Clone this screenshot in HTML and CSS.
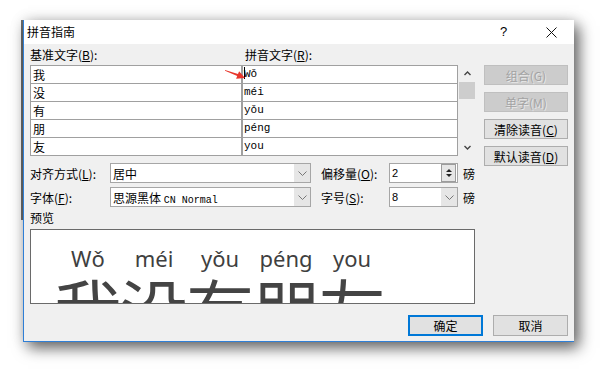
FILE: index.html
```html
<!DOCTYPE html>
<html>
<head>
    <title>拼音指南</title>
    <link rel="stylesheet" href="styles.css">
</head>
<body>
    <div class="stage">
        <!-- edge of the window behind the dialog -->
        <div class="behind-edge"></div>

        <div class="dialog">
            <div class="titlebar">
                <span class="title">拼音指南</span>
                <span class="help">?</span>
                <span class="close">
                    <svg width="11" height="11" viewBox="0 0 11 11"><path d="M0.5 0.5 L10.5 10.5 M10.5 0.5 L0.5 10.5" stroke="#111" stroke-width="1" fill="none"/></svg>
                </span>
            </div>

            <div class="content">
                <div class="main">
                    <div class="left">
                        <div class="heads">
                            <span class="head-base">基准文字(<u>B</u>):</span>
                            <span>拼音文字(<u>R</u>):</span>
                        </div>

                        <div class="table-wrap">
                            <div class="grid">
                                <div class="cell">我</div><div class="cell ruby"><i class="caret"></i>Wǒ</div>
                                <div class="cell">没</div><div class="cell ruby">méi</div>
                                <div class="cell">有</div><div class="cell ruby">yǒu</div>
                                <div class="cell">朋</div><div class="cell ruby">péng</div>
                                <div class="cell">友</div><div class="cell ruby">you</div>
                            </div>
                            <div class="scrollbar">
                                <div class="sb-btn"><svg width="7" height="5" viewBox="0 0 7 5"><path d="M0.5 4 L3.5 1 L6.5 4" stroke="#444" stroke-width="1.4" fill="none"/></svg></div>
                                <div class="sb-thumb"></div>
                                <div class="sb-track"></div>
                                <div class="sb-btn"><svg width="7" height="5" viewBox="0 0 7 5"><path d="M0.5 1 L3.5 4 L6.5 1" stroke="#444" stroke-width="1.4" fill="none"/></svg></div>
                            </div>
                            <svg class="arrow" width="24" height="16" viewBox="0 0 24 16">
                                <polygon points="1,4 14,7.9 15.1,5.3 21,12 12.1,12.7 13.2,10.1 1,4.8" fill="#e8372c"/>
                            </svg>
                        </div>

                        <div class="opt-row">
                            <span class="opt-label">对齐方式(<u>L</u>):</span>
                            <div class="combo wide"><span class="combo-text">居中</span><span class="drop"><svg width="9" height="5" viewBox="0 0 9 5"><path d="M0.5 0.5 L4.5 4.5 L8.5 0.5" stroke="#777" fill="none"/></svg></span></div>
                            <span class="opt-label2">偏移量(<u>O</u>):</span>
                            <div class="combo small"><span class="num">2</span><span class="spin"><span class="spin-up"></span><span class="spin-down"></span></span></div>
                            <span class="unit">磅</span>
                        </div>
                        <div class="opt-row second">
                            <span class="opt-label">字体(<u>F</u>):</span>
                            <div class="combo wide"><span class="combo-text">思源黑体 <span class="mono">CN Normal</span></span><span class="drop"><svg width="9" height="5" viewBox="0 0 9 5"><path d="M0.5 0.5 L4.5 4.5 L8.5 0.5" stroke="#777" fill="none"/></svg></span></div>
                            <span class="opt-label2">字号(<u>S</u>):</span>
                            <div class="combo small"><span class="num">8</span><span class="drop"><svg width="9" height="5" viewBox="0 0 9 5"><path d="M0.5 0.5 L4.5 4.5 L8.5 0.5" stroke="#777" fill="none"/></svg></span></div>
                            <span class="unit">磅</span>
                        </div>

                        <div class="preview-label">预览</div>
                        <div class="preview">
                            <div class="pv-col"><span class="py">Wǒ</span><span class="hz">我</span></div>
                            <div class="pv-col"><span class="py">méi</span><span class="hz">没</span></div>
                            <div class="pv-col"><span class="py">yǒu</span><span class="hz">有</span></div>
                            <div class="pv-col"><span class="py">péng</span><span class="hz">朋</span></div>
                            <div class="pv-col"><span class="py">you</span><span class="hz">友</span></div>
                        </div>
                    </div>

                    <div class="side">
                        <button class="btn disabled">组合(G)</button>
                        <button class="btn disabled">单字(M)</button>
                        <button class="btn">清除读音(<u>C</u>)</button>
                        <button class="btn">默认读音(<u>D</u>)</button>
                    </div>
                </div>

                <div class="footer">
                    <button class="btn footer-btn default">确定</button>
                    <button class="btn footer-btn">取消</button>
                </div>
            </div>
        </div>
    </div>
</body>
</html>
```

FILE: styles.css
```css
body {
    margin: 0;
    background: #fff;
    font-family: "Noto Sans CJK SC", "Noto Sans", sans-serif;
    font-size: 12px;
    color: #000;
}

u {
    text-decoration: underline;
    text-underline-offset: 1px;
}

.stage {
    position: relative;
    width: 616px;
    height: 385px;
    padding: 20px 0 0 23px;
    box-sizing: border-box;
}

.behind-edge {
    position: absolute;
    left: 21px;
    top: 20px;
    width: 2px;
    height: 200px;
    background: #6e6e6e;
}

/* Dialog frame */
.dialog {
    position: relative;
    width: 551px;
    height: 322px;
    box-sizing: border-box;
    background: #f0f0f0;
    border-left: 1px solid #2f7fd6;
    border-bottom: 1px solid #2f7fd6;
    box-shadow: 5px 6px 14px rgba(0, 0, 0, 0.6), 0 0 14px rgba(0, 0, 0, 0.12);
}

.titlebar {
    height: 24px;
    background: #fff;
    display: flex;
    align-items: center;
    line-height: 24px;
}

.title {
    padding-left: 3px;
    flex: 1;
}

.help {
    width: 14px;
    font-family: "Liberation Sans", sans-serif;
    font-size: 13px;
    margin-right: 32px;
}

.close {
    display: flex;
    width: 12px;
    margin-right: 16px;
}

.content {
    padding: 0 6px;
}

.main {
    display: flex;
    gap: 9px;
}

.left {
    width: 445px;
}

.heads {
    height: 21px;
    line-height: 21px;
    display: flex;
}

.head-base {
    width: 215px;
}

/* Base text / ruby grid */
.table-wrap {
    position: relative;
    display: flex;
}

.grid {
    display: grid;
    grid-template-columns: 212px 215px;
    grid-auto-rows: 18px;
    border-top: 1px solid #a0a0a0;
    border-left: 1px solid #a0a0a0;
}

.cell {
    background: #fff;
    border-right: 1px solid #a0a0a0;
    border-bottom: 1px solid #a0a0a0;
    padding-left: 2px;
    line-height: 17px;
    white-space: nowrap;
}

.cell:nth-child(odd) {
    border-right-width: 2px;
}

.cell.ruby {
    font-family: "Liberation Mono", monospace;
    font-size: 11px;
    padding-left: 1px;
}

.caret {
    display: inline-block;
    width: 1px;
    height: 12px;
    background: #000;
    vertical-align: -2px;
    margin-right: -1px;
}

.arrow {
    position: absolute;
    left: 194px;
    top: 1px;
}

.scrollbar {
    width: 16px;
    margin-left: 1px;
    display: flex;
    flex-direction: column;
}

.sb-btn {
    height: 17px;
    display: flex;
    align-items: center;
    justify-content: center;
}

.sb-thumb {
    height: 17px;
    background: #cdcdcd;
}

.sb-track {
    flex: 1;
}

/* Alignment / font options */
.opt-row {
    display: flex;
    align-items: center;
    height: 20px;
    margin-top: 7px;
}

.opt-row.second {
    margin-top: 4px;
}

.opt-label {
    width: 80px;
}

.opt-label2 {
    width: 68px;
    margin-left: 10px;
}

.combo {
    height: 20px;
    box-sizing: border-box;
    border: 1px solid #a6a6a6;
    background: #fff;
    display: flex;
    align-items: center;
}

.combo.wide {
    width: 201px;
}

.combo.small {
    width: 69px;
}

.combo-text {
    flex: 1;
    padding-left: 2px;
    white-space: nowrap;
}

.mono {
    font-family: "Liberation Mono", monospace;
    font-size: 10px;
}

.num {
    flex: 1;
    padding-left: 2px;
    font-family: "Liberation Sans", sans-serif;
    font-size: 11px;
}

.drop {
    width: 16px;
    height: 18px;
    background: #e6e6e6;
    display: flex;
    align-items: center;
    justify-content: center;
}

.spin {
    width: 13px;
    height: 16px;
    margin-right: 1px;
    border: 1px solid #9c9c9c;
    background: #e6e6e6;
    display: flex;
    flex-direction: column;
    align-items: center;
    justify-content: center;
    gap: 2px;
}

.spin-up,
.spin-down {
    width: 0;
    height: 0;
    border-left: 3px solid transparent;
    border-right: 3px solid transparent;
}

.spin-up {
    border-bottom: 3px solid #222;
}

.spin-down {
    border-top: 3px solid #222;
}

.unit {
    margin-left: 5px;
}

/* Preview */
.preview-label {
    height: 22px;
    line-height: 22px;
}

.preview {
    height: 75px;
    box-sizing: border-box;
    border: 1px solid #6a6a6a;
    background: #fff;
    overflow: hidden;
    display: flex;
    padding-left: 24px;
}

.pv-col {
    width: 66px;
    display: flex;
    flex-direction: column;
    align-items: center;
}

.py {
    font-family: "Noto Sans", sans-serif;
    font-size: 22px;
    line-height: 26px;
    margin-top: 15px;
    color: #3f3f3f;
}

.hz {
    font-family: "Noto Sans CJK SC", sans-serif;
    font-size: 68px;
    line-height: 68px;
    margin-top: 3px;
    color: #444;
    white-space: nowrap;
}

/* Buttons */
.side {
    width: 84px;
    padding-top: 21px;
    display: flex;
    flex-direction: column;
    gap: 7px;
}

.btn {
    height: 20px;
    padding: 0;
    box-sizing: border-box;
    border: 1px solid #adadad;
    background: #e1e1e1;
    font-family: "Noto Sans CJK SC", sans-serif;
    font-size: 12px;
    line-height: 17px;
    color: #000;
}

.btn.disabled {
    background: #cccccc;
    border-color: #bfbfbf;
    color: #a3a3a3;
    text-shadow: 1px 1px 0 #e8e8e8;
}

.footer {
    display: flex;
    justify-content: flex-end;
    gap: 10px;
    margin-top: 11px;
}

.footer-btn {
    width: 75px;
    height: 21px;
}

.footer-btn.default {
    border: 2px solid #0078d7;
    line-height: 16px;
}
```
